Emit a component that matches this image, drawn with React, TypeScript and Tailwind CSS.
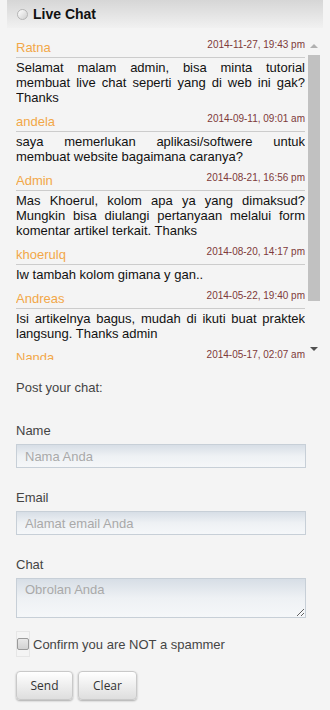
import React from "react";

type Msg = { name: string; date: string; lines: string[] };

const msgs: Msg[] = [
  {
    name: "Ratna",
    date: "2014-11-27, 19:43 pm",
    lines: [
      "Selamat malam admin, bisa minta tutorial",
      "membuat live chat seperti yang di web ini gak?",
      "Thanks",
    ],
  },
  {
    name: "andela",
    date: "2014-09-11, 09:01 am",
    lines: ["saya memerlukan aplikasi/softwere untuk", "membuat website bagaimana caranya?"],
  },
  {
    name: "Admin",
    date: "2014-08-21, 16:56 pm",
    lines: [
      "Mas Khoerul, kolom apa ya yang dimaksud?",
      "Mungkin bisa diulangi pertanyaan melalui form",
      "komentar artikel terkait. Thanks",
    ],
  },
  {
    name: "khoerulq",
    date: "2014-08-20, 14:17 pm",
    lines: ["Iw tambah kolom gimana y gan.."],
  },
  {
    name: "Andreas",
    date: "2014-05-22, 19:40 pm",
    lines: ["Isi artikelnya bagus, mudah di ikuti buat praktek", "langsung. Thanks admin"],
  },
  {
    name: "Nanda",
    date: "2014-05-17, 02:07 am",
    lines: [],
  },
];

function Entry({ m }: { m: Msg }) {
  return (
    <div className="mb-[9px]">
      <div className="flex items-start justify-between border-b border-[#cccccc] pb-[2px]">
        <span className="text-[13px] leading-[15px] text-[#f2a748]">{m.name}</span>
        <span className="text-[10px] leading-[9px] text-[#7e3a3a]">{m.date}</span>
      </div>
      {m.lines.length > 0 && (
        <div className="mt-[2px] text-[13px] leading-[15px] text-[#111111]">
          {m.lines.map((l, i) =>
            i < m.lines.length - 1 ? (
              <div key={i} className="text-justify [text-align-last:justify]">
                {l}
              </div>
            ) : (
              <div key={i}>{l}</div>
            )
          )}
        </div>
      )}
    </div>
  );
}

function Field({ label, placeholder }: { label: string; placeholder: string }) {
  return (
    <div>
      <div className="text-[13px] leading-[15px] text-[#444444]">{label}</div>
      <input
        placeholder={placeholder}
        className="mt-[6px] block h-[24px] w-[290px] border border-[#c7cfd7] bg-gradient-to-b from-[#d7dee6] via-[#eef1f4] to-[#f5f7f9] px-[8px] text-[13px] text-[#333] outline-none placeholder:text-[#a9a9a9]"
      />
    </div>
  );
}

export default function App() {
  return (
    <div
      className="min-h-[710px] w-[330px] bg-[#f4f4f4]"
      style={{ fontFamily: '"Liberation Sans", Arial, sans-serif' }}
    >
      <div className="mx-[7px] flex h-[28px] items-center bg-gradient-to-b from-[#d6d6d6] to-[#f1f1f1] pl-[10px]">
        <span className="h-[11px] w-[11px] rounded-full border border-[#b5b5b5] bg-gradient-to-br from-[#ffffff] to-[#cfcfcf]" />
        <span className="ml-[5px] text-[14px] font-bold text-[#111111]">Live Chat</span>
      </div>

      <div className="mt-[8px] flex h-[324px] pl-[16px]">
        <div className="h-full w-[289px] overflow-hidden pt-[4px]">
          {msgs.map((m) => (
            <Entry key={m.name} m={m} />
          ))}
        </div>
        <div className="ml-[2px] flex h-full w-[14px] flex-col items-center">
          <div className="flex h-[19px] w-full items-center justify-center">
            <span className="h-0 w-0 border-x-[4px] border-b-[4px] border-x-transparent border-b-[#b0b0b0]" />
          </div>
          <div className="h-[246px] w-[12px] bg-[#c1c1c1]" />
          <div className="flex-1" />
          <div className="flex h-[19px] w-full items-center justify-center pb-[3px]">
            <span className="h-0 w-0 border-x-[4px] border-t-[4px] border-x-transparent border-t-[#505050]" />
          </div>
        </div>
      </div>

      <div className="pl-[16px]">
        <div className="mt-[20px] text-[13px] leading-[15px] text-[#444444]">Post your chat:</div>
        <div className="mt-[28px]">
          <Field label="Name" placeholder="Nama Anda" />
        </div>
        <div className="mt-[22px]">
          <Field label="Email" placeholder="Alamat email Anda" />
        </div>
        <div className="mt-[22px]">
          <div className="text-[13px] leading-[15px] text-[#444444]">Chat</div>
          <textarea
            placeholder="Obrolan Anda"
            className="mt-[6px] block h-[40px] w-[290px] border border-[#c7cfd7] bg-gradient-to-b from-[#d7dee6] via-[#eef1f4] to-[#f5f7f9] px-[8px] pt-[3px] text-[13px] leading-[15px] text-[#333] outline-none placeholder:text-[#a9a9a9]"
          />
        </div>
        <div className="mt-[13px] flex items-center">
          <span className="flex h-[26px] w-[14px] items-center justify-center border border-[#e6e6e6]">
            <span className="h-[12px] w-[12px] rounded-[2px] border border-[#9a9a9a] bg-gradient-to-b from-[#e8e8e8] to-[#d2d2d2]" />
          </span>
          <span className="ml-[3px] text-[13px] leading-[15px] text-[#444444]">Confirm you are NOT a spammer</span>
        </div>
        <div className="mt-[14px] flex gap-[5px]">
          <button
            className="h-[29px] w-[57px] rounded-[4px] border border-[#c9c9c9] bg-gradient-to-b from-[#ffffff] to-[#dedede] text-[12px] text-[#333] shadow-[0_1px_2px_rgba(0,0,0,0.3)]"
            style={{ fontFamily: '"Open Sans", sans-serif' }}
          >
            Send
          </button>
          <button
            className="h-[29px] w-[59px] rounded-[4px] border border-[#c9c9c9] bg-gradient-to-b from-[#ffffff] to-[#dedede] text-[12px] text-[#333] shadow-[0_1px_2px_rgba(0,0,0,0.3)]"
            style={{ fontFamily: '"Open Sans", sans-serif' }}
          >
            Clear
          </button>
        </div>
      </div>
    </div>
  );
}
